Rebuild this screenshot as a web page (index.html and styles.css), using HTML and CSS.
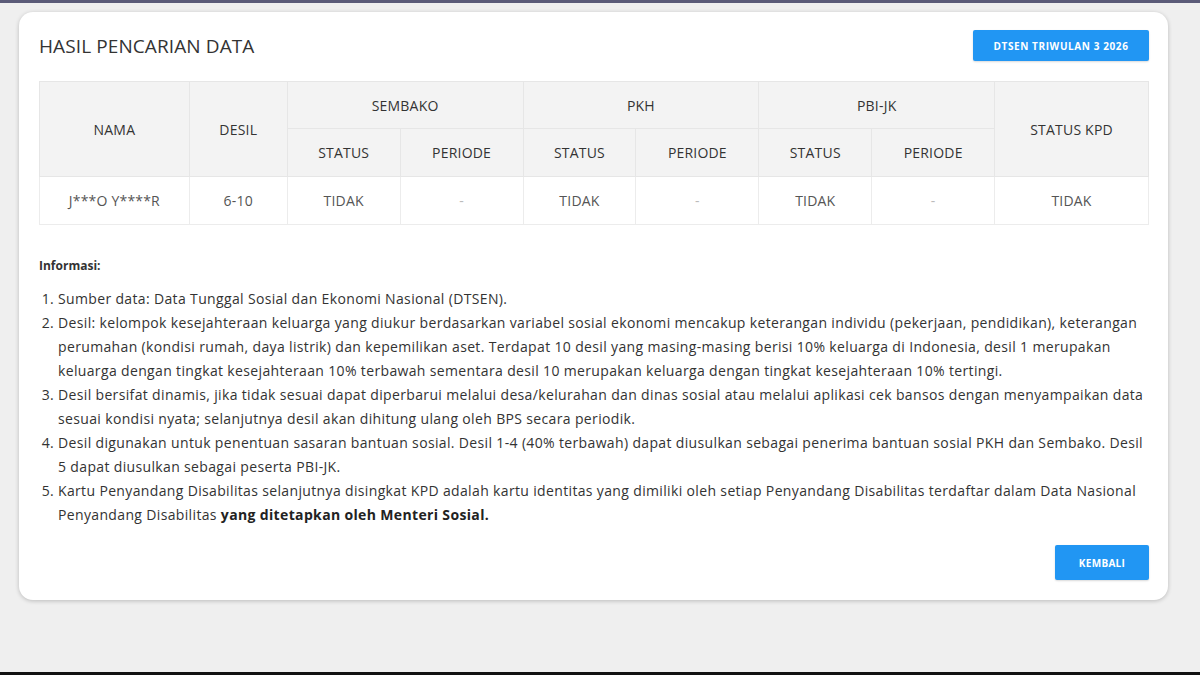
FILE: index.html
```html
<!DOCTYPE html>
<html lang="id">
<head>
    <meta charset="UTF-8">
    <meta name="viewport" content="width=device-width, initial-scale=1.0">
    <title>Hasil Pencarian Data</title>
    <link rel="stylesheet" href="styles.css">
</head>
<body>
    <div class="top-bar"></div>
    <main class="page">
        <section class="result-card">
            <div class="card-header">
                <h2>HASIL PENCARIAN DATA</h2>
                <button class="btn-primary btn-period">DTSEN TRIWULAN 3 2026</button>
            </div>

            <table class="result-table">
                <thead>
                    <tr>
                        <th rowspan="2" class="col-nama">NAMA</th>
                        <th rowspan="2" class="col-desil">DESIL</th>
                        <th colspan="2">SEMBAKO</th>
                        <th colspan="2">PKH</th>
                        <th colspan="2">PBI-JK</th>
                        <th rowspan="2" class="col-kpd">STATUS KPD</th>
                    </tr>
                    <tr>
                        <th class="col-status">STATUS</th>
                        <th class="col-periode">PERIODE</th>
                        <th class="col-status">STATUS</th>
                        <th class="col-periode">PERIODE</th>
                        <th class="col-status">STATUS</th>
                        <th class="col-periode">PERIODE</th>
                    </tr>
                </thead>
                <tbody>
                    <tr>
                        <td>J***O Y****R</td>
                        <td>6-10</td>
                        <td>TIDAK</td>
                        <td class="dash">-</td>
                        <td>TIDAK</td>
                        <td class="dash">-</td>
                        <td>TIDAK</td>
                        <td class="dash">-</td>
                        <td>TIDAK</td>
                    </tr>
                </tbody>
            </table>

            <div class="info">
                <p class="info-title">Informasi:</p>
                <ol class="info-list">
                    <li>Sumber data: Data Tunggal Sosial dan Ekonomi Nasional (DTSEN).</li>
                    <li>Desil: kelompok kesejahteraan keluarga yang diukur berdasarkan variabel sosial ekonomi mencakup keterangan individu (pekerjaan, pendidikan), keterangan perumahan (kondisi rumah, daya listrik) dan kepemilikan aset. Terdapat 10 desil yang masing-masing berisi 10% keluarga di Indonesia, desil 1 merupakan keluarga dengan tingkat kesejahteraan 10% terbawah sementara desil 10 merupakan keluarga dengan tingkat kesejahteraan 10% tertingi.</li>
                    <li>Desil bersifat dinamis, jika tidak sesuai dapat diperbarui melalui desa/kelurahan dan dinas sosial atau melalui aplikasi cek bansos dengan menyampaikan data sesuai kondisi nyata; selanjutnya desil akan dihitung ulang oleh BPS secara periodik.</li>
                    <li>Desil digunakan untuk penentuan sasaran bantuan sosial. Desil 1-4 (40% terbawah) dapat diusulkan sebagai penerima bantuan sosial PKH dan Sembako. Desil 5 dapat diusulkan sebagai peserta PBI-JK.</li>
                    <li>Kartu Penyandang Disabilitas selanjutnya disingkat KPD adalah kartu identitas yang dimiliki oleh setiap Penyandang Disabilitas terdaftar dalam Data Nasional Penyandang Disabilitas <strong>yang ditetapkan oleh Menteri Sosial.</strong></li>
                </ol>
            </div>

            <div class="card-footer">
                <button class="btn-primary btn-back">KEMBALI</button>
            </div>
        </section>
    </main>
    <div class="bottom-bar"></div>
</body>
</html>
```

FILE: styles.css
```css
html, body {
    height: 100%;
}

body {
    font-family: "Open Sans", "Noto Sans", sans-serif;
    margin: 0;
    padding: 0;
    background-color: #efefef;
    color: #333;
    display: flex;
    flex-direction: column;
}

.top-bar {
    height: 3px;
    background-color: #5b5b78;
}

.bottom-bar {
    height: 3px;
    background-color: #111;
}

.page {
    flex: 1;
    padding: 9px 32px 0 19px;
}

/* Card */
.result-card {
    background: #fff;
    border-radius: 14px;
    box-shadow: 0 1px 4px rgba(0, 0, 0, 0.22);
    padding: 18px 19px 20px 20px;
}

.card-header {
    display: flex;
    justify-content: space-between;
    align-items: center;
    margin-bottom: 20px;
}

.card-header h2 {
    margin: 0;
    font-size: 19px;
    font-weight: 400;
    color: #333;
    letter-spacing: 0.1px;
}

.btn-primary {
    font-family: "Open Sans", sans-serif;
    background-color: #2196f3;
    color: #fff;
    border: none;
    border-radius: 2px;
    font-weight: 700;
    cursor: pointer;
    box-shadow: 0 1px 2px rgba(0, 0, 0, 0.15);
}

.btn-period {
    width: 176px;
    height: 31px;
    font-size: 10px;
    letter-spacing: 0.6px;
}

/* Table */
.result-table {
    width: 100%;
    border-collapse: collapse;
    font-size: 14px;
    text-align: center;
    letter-spacing: 0.2px;
}

.result-table th {
    background-color: #f3f3f3;
    font-weight: 400;
    color: #333;
    border: 1px solid #e6e6e6;
    height: 47px;
    padding: 0 8px;
}

.result-table thead tr:first-child th {
    height: 46px;
}

.result-table td {
    height: 47px;
    padding: 0 8px;
    border: 1px solid #ececec;
    color: #555;
}

.result-table td.dash {
    color: #bbb;
}

.col-nama { width: 133px; }
.col-desil { width: 81px; }
.col-status { width: 96px; }
.col-periode { width: 106px; }
.col-kpd { width: 137px; }

/* Info list */
.info {
    margin-top: 33px;
}

.info-title {
    margin: 0 0 13px;
    font-size: 12px;
    line-height: 16px;
    font-weight: 700;
    color: #333;
}

.info-list {
    margin: 0;
    padding-left: 19px;
    font-size: 14px;
    line-height: 24px;
    letter-spacing: 0.35px;
    color: #333;
}

.info-list strong {
    color: #222;
}

.card-footer {
    display: flex;
    justify-content: flex-end;
    margin-top: 18px;
}

.btn-back {
    width: 94px;
    height: 35px;
    font-size: 10px;
    letter-spacing: 0.3px;
}
```
